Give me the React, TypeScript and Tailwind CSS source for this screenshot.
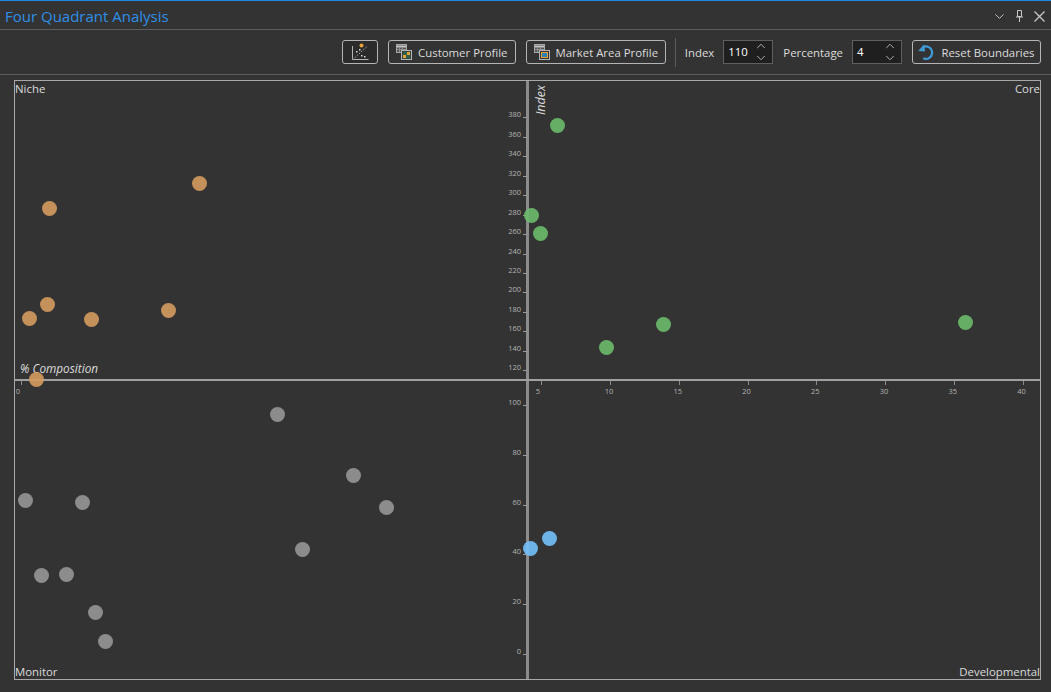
import React from 'react';
import { ChevronDown, ChevronUp } from 'lucide-react';

const FONT = "font-['Open_Sans','Noto_Sans',sans-serif]";

const ORANGE = 'bg-[#d49b5e]';
const GREEN = 'bg-[#6cbb6c]';
const GREY = 'bg-[#969696]';
const BLUE = 'bg-[#74c1fc]';

const points = [
  { x: 199, y: 183, c: ORANGE },
  { x: 49, y: 208, c: ORANGE },
  { x: 47, y: 304, c: ORANGE },
  { x: 29, y: 318, c: ORANGE },
  { x: 91, y: 319, c: ORANGE },
  { x: 168, y: 310, c: ORANGE },
  { x: 36, y: 379, c: ORANGE },
  { x: 557, y: 125, c: GREEN },
  { x: 531, y: 215, c: GREEN },
  { x: 540, y: 233, c: GREEN },
  { x: 606, y: 347, c: GREEN },
  { x: 663, y: 324, c: GREEN },
  { x: 965, y: 322, c: GREEN },
  { x: 277, y: 414, c: GREY },
  { x: 353, y: 475, c: GREY },
  { x: 386, y: 507, c: GREY },
  { x: 25, y: 500, c: GREY },
  { x: 82, y: 502, c: GREY },
  { x: 302, y: 549, c: GREY },
  { x: 41, y: 575, c: GREY },
  { x: 66, y: 574, c: GREY },
  { x: 95, y: 612, c: GREY },
  { x: 105, y: 641, c: GREY },
  { x: 530, y: 548, c: BLUE },
  { x: 549, y: 538, c: BLUE },
];

// y axis ticks, top half then bottom half
const yTicks: [string, number][] = [
  ...[380, 360, 340, 320, 300, 280, 260, 240, 220, 200, 180, 160, 140, 120].map(
    (v, i): [string, number] => [String(v), 117.3 + i * 19.46]
  ),
  ...[100, 80, 60, 40, 20, 0].map((v, i): [string, number] => [String(v), 405 + i * 49.8]),
];

// value, tick x, label centre x
const xTicks: [string, number, number][] = [
  ['0', 21, 18],
  ['5', 541, 538],
  ...[10, 15, 20, 25, 30, 35, 40].map((v, i): [string, number, number] => {
    const x = 610 + i * 68.75;
    return [String(v), x, x - 1];
  }),
];

// chart coordinates are page coordinates, the box starts at 14,80
const OX = 15;
const OY = 81;

const ToolButton: React.FC<{ icon: React.ReactNode; label?: string; className?: string }> = ({ icon, label, className }) => (
  <button className={`h-6 flex items-center justify-center gap-[6px] rounded-[3px] border border-[#b5b5b5] text-[11.4px] text-[#dcdcdc] ${className ?? ''}`}>
    {icon}
    {label && <span className="pt-px">{label}</span>}
  </button>
);

const TableIcon: React.FC<{ accent: 'customer' | 'market' }> = ({ accent }) => (
  <svg width="16" height="16" viewBox="0 0 16 16" fill="none">
    <rect x="0.5" y="0.5" width="10" height="8" fill="#555" stroke="#a8a8a8" />
    <path d="M1 2.5h9" stroke="#c4c4c4" strokeWidth="2" />
    <path d="M3.5 4v4M6.5 4v4M1 5.5h9" stroke="#8e8e8e" />
    <rect x="5.5" y="6.5" width="10" height="9" fill="#333" stroke="#b4b4b4" />
    {accent === 'customer' ? (
      <>
        <rect x="6.5" y="7.5" width="8" height="7" fill="#2f5f4a" />
        <rect x="7" y="11" width="3" height="3" fill="#e5a23a" />
        <rect x="11" y="8" width="3" height="3" fill="#e5a23a" />
      </>
    ) : (
      <rect x="7.5" y="8.5" width="6" height="5" fill="#2f7fb5" stroke="#e5a23a" />
    )}
  </svg>
);

const ScatterIcon = () => (
  <svg width="18" height="18" viewBox="0 0 18 18" fill="none">
    <path d="M1.5 3v13.5h16" stroke="#b4b4b4" />
    <path d="M3.5 15L16 3.5" stroke="#b4b4b4" strokeDasharray="1.5 1.5" />
    <circle cx="10.5" cy="2.5" r="2" fill="#e8a23a" />
    <rect x="5" y="8" width="1.5" height="1.5" fill="#d8d8d8" />
    <rect x="8" y="6" width="1.5" height="1.5" fill="#d8d8d8" />
    <rect x="10" y="12" width="1.5" height="1.5" fill="#d8d8d8" />
    <rect x="13" y="13" width="1.5" height="1.5" fill="#d8d8d8" />
  </svg>
);

const ResetIcon = () => (
  <svg width="17" height="16" viewBox="0 0 17 16" fill="none">
    <path d="M4.6 3.4A6.2 6.2 0 1 1 5.2 14.2" stroke="#3f9ad6" strokeWidth="2.2" />
    <path d="M0.2 7L7.2 7.6 6 0.6Z" fill="#3f9ad6" />
  </svg>
);

const PinIcon = () => (
  <svg width="7" height="12" viewBox="0 0 7 12" fill="none">
    <path d="M1.5 0.5h4v6h-4z" stroke="#c8c8c8" />
    <path d="M0 7h7M3.5 7v5" stroke="#c8c8c8" />
  </svg>
);

const Spinner: React.FC<{ value: string; width: string }> = ({ value, width }) => (
  <div className={`${width} h-6 flex items-center justify-between pl-[4px] pr-[4px] border border-[#5f5f5f] bg-[#1f1f1f] text-[11.4px] text-white`}>
    <span>{value}</span>
    <div className="flex flex-col items-center text-[#b8b8b8]">
      <ChevronUp size={14} strokeWidth={1.6} className="-mb-[2px]" />
      <ChevronDown size={14} strokeWidth={1.6} />
    </div>
  </div>
);

const App: React.FC = () => {
  return (
    <div className={`${FONT} w-[1051px] h-[692px] overflow-hidden flex flex-col bg-[#333333] border-t border-[#1e88e5]`}>
      {/* title bar */}
      <div className="h-[29px] shrink-0 flex items-center justify-between pl-[5px] pr-[6px] pt-[2px] border-b border-[#5c5c5c]">
        <span className="text-[15px] text-[#2f8fe8] leading-none">Four Quadrant Analysis</span>
        <div className="flex items-center text-[#c4c4c4]">
          <ChevronDown size={15} strokeWidth={1.6} className="mr-[9px]" />
          <PinIcon />
          <svg width="11" height="11" viewBox="0 0 11 11" fill="none" className="ml-[11px]">
            <path d="M0.5 0.5l10 10M10.5 0.5l-10 10" stroke="#c8c8c8" strokeWidth="1.3" />
          </svg>
        </div>
      </div>

      {/* toolbar */}
      <div className="h-[45px] shrink-0 flex items-center justify-end pr-[10px] border-b border-[#5c5c5c]">
        <ToolButton icon={<ScatterIcon />} className="w-9 mr-[10px] bg-[#2b2b2b]" />
        <ToolButton icon={<TableIcon accent="customer" />} label="Customer Profile" className="w-[128px] mr-[10px]" />
        <ToolButton icon={<TableIcon accent="market" />} label="Market Area Profile" className="w-[140px] mr-[9px]" />
        <div className="w-px h-[29px] bg-[#5c5c5c] mr-[9px]" />
        <span className="text-[11.4px] pt-px text-[#dcdcdc] mr-[9px]">Index</span>
        <Spinner value="110" width="w-[50px]" />
        <span className="text-[11.4px] pt-px text-[#dcdcdc] ml-[10px] mr-[9px]">Percentage</span>
        <Spinner value="4" width="w-[50px]" />
        <ToolButton icon={<ResetIcon />} label="Reset Boundaries" className="w-[129px] ml-[10px]" />
      </div>

      {/* chart */}
      <div className="flex-1 pl-[14px] pr-[10px] pt-[5px] pb-[12px]">
        <div className="relative w-[1027px] h-[600px] border border-[#a8a8a8] text-[11.4px] text-[#dcdcdc]">
          <span className="absolute left-0 top-0 leading-[16px]">Niche</span>
          <span className="absolute right-0 top-0 leading-[16px]">Core</span>
          <span className="absolute left-0 bottom-0 leading-[16px] translate-y-px">Monitor</span>
          <span className="absolute right-0 bottom-0 leading-[16px] translate-y-px">Developmental</span>

          {/* axes */}
          <div className="absolute left-[511px] top-0 bottom-0 w-[3px] bg-[#8c8c8c]" />
          <div className="absolute left-0 right-0 top-[298px] h-[2px] bg-[#a0a0a0]" />

          <span className="absolute left-[5px] top-[279px] italic text-[11.8px] leading-[16px]">% Composition</span>
          <span className="absolute left-[518px] top-[4px] italic text-[12.5px] leading-[16px] [writing-mode:vertical-rl] rotate-180">Index</span>

          {yTicks.map(([label, y]) => (
            <React.Fragment key={label}>
              <span
                className="absolute right-[519px] text-[7.5px] leading-[10px] text-[#b4b4b4]"
                style={{ top: y - OY - 8 }}
              >
                {label}
              </span>
              <div className="absolute left-[508px] w-[4px] h-px bg-[#9a9a9a]" style={{ top: y - OY }} />
            </React.Fragment>
          ))}

          {xTicks.map(([label, x, labelX]) => (
            <React.Fragment key={label}>
              <div className="absolute top-[300px] w-px h-[4px] bg-[#8a8a8a]" style={{ left: x - OX }} />
              <span
                className="absolute top-[305px] w-6 -ml-[12px] text-center text-[7.5px] leading-[10px] text-[#b4b4b4]"
                style={{ left: labelX - OX }}
              >
                {label}
              </span>
            </React.Fragment>
          ))}

          {points.map((p, i) => (
            <div
              key={i}
              className={`absolute w-[15px] h-[15px] rounded-full opacity-90 ${p.c}`}
              style={{ left: p.x - OX - 7.5, top: p.y - OY - 7.5 }}
            />
          ))}
        </div>
      </div>
    </div>
  );
};

export default App;
